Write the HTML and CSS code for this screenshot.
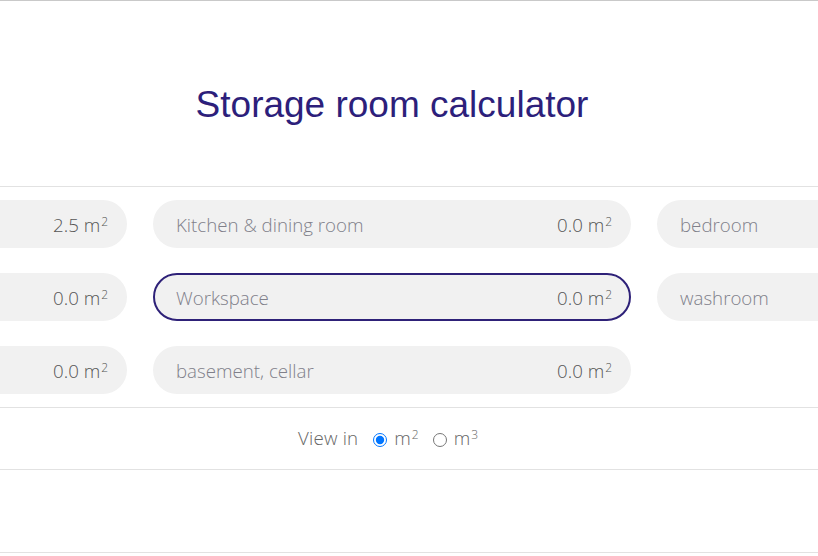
FILE: index.html
```html
<!DOCTYPE html>
<html lang="en">
<head>
<meta charset="utf-8">
<title>Storage room calculator</title>
<link rel="stylesheet" href="styles.css">
</head>
<body>
<div class="page">
  <header class="head">
    <h1 class="title">Storage room calculator</h1>
  </header>
  <section class="rooms">
    <div class="grid">
      <div class="pill"><span class="label"></span><span class="value">2.5 m<sup>2</sup></span></div>
      <div class="pill"><span class="label">Kitchen &amp; dining room</span><span class="value">0.0 m<sup>2</sup></span></div>
      <div class="pill"><span class="label">bedroom</span><span class="value">0.0 m<sup>2</sup></span></div>
      <div class="pill"><span class="label"></span><span class="value">0.0 m<sup>2</sup></span></div>
      <div class="pill focused"><span class="label">Workspace</span><span class="value">0.0 m<sup>2</sup></span></div>
      <div class="pill"><span class="label">washroom</span><span class="value">0.0 m<sup>2</sup></span></div>
      <div class="pill"><span class="label"></span><span class="value">0.0 m<sup>2</sup></span></div>
      <div class="pill"><span class="label">basement, cellar</span><span class="value">0.0 m<sup>2</sup></span></div>
    </div>
  </section>
  <section class="units">
    <span class="units-label">View in</span>
    <label class="opt"><input type="radio" name="unit" checked><span>m<sup>2</sup></span></label>
    <label class="opt"><input type="radio" name="unit"><span>m<sup>3</sup></span></label>
  </section>
  <section class="result"></section>
</div>
</body>
</html>
```

FILE: styles.css
```css
html, body {
  margin: 0;
  padding: 0;
  background: #fff;
  overflow: hidden;
}
body {
  font-family: "Open Sans", "Noto Sans", sans-serif;
  width: 818px;
  height: 556px;
}
.page {
  border-top: 1px solid #c9c9c9;
}
.head {
  height: 186px;
  box-sizing: border-box;
  padding-top: 82px;
  border-bottom: 1px solid #e2e2e2;
}
.title {
  margin: 0;
  width: 784px;
  text-align: center;
  font-family: "Liberation Sans", Arial, sans-serif;
  font-weight: 400;
  font-size: 37px;
  line-height: 43px;
  color: #2d1f7b;
}
.rooms {
  border-bottom: 1px solid #e2e2e2;
  padding: 13px 0 13px;
}
.grid {
  width: 784px;
  display: grid;
  grid-template-columns: repeat(3, 478px);
  justify-content: center;
  column-gap: 26px;
  row-gap: 25px;
}
.pill {
  height: 48px;
  box-sizing: border-box;
  border-radius: 24px;
  background: #f1f1f1;
  border: 2px solid transparent;
  display: flex;
  align-items: center;
  justify-content: space-between;
  padding: 0 17px 0 21px;
  font-weight: 300;
  font-size: 18.7px;
}
.pill.focused {
  border-color: #2e2178;
}
.label {
  color: #80808a;
}
.value {
  color: #555;
}
sup {
  font-size: 0.64em;
  line-height: 0;
  vertical-align: 0.5em;
  margin-left: 1px;
}
.units {
  width: 784px;
  height: 61px;
  display: flex;
  align-items: center;
  justify-content: center;
  font-weight: 300;
  font-size: 18.7px;
  color: #666;
  padding: 0 0 2px 6px;
  box-sizing: border-box;
}
.units-label {
  margin-right: 15px;
  letter-spacing: 0.2px;
}
.opt {
  display: flex;
  align-items: center;
  margin-right: 14px;
}
.opt input {
  margin: 5px 7px 0 0;
  width: 14px;
  height: 14px;
}
.result {
  border-top: 1px solid #e2e2e2;
  border-bottom: 1px solid #e2e2e2;
  height: 82px;
}
```
